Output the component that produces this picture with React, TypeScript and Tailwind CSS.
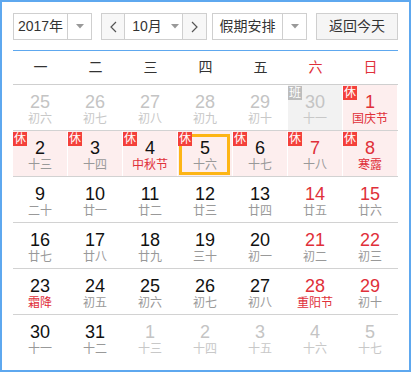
import React from "react";

type Day = {
  n: number;
  lunar: string;
  other?: boolean;
  fest?: boolean;
  badge?: "休" | "班";
  selected?: boolean;
};

const rows: Day[][] = [
  [
    { n: 25, lunar: "初六", other: true },
    { n: 26, lunar: "初七", other: true },
    { n: 27, lunar: "初八", other: true },
    { n: 28, lunar: "初九", other: true },
    { n: 29, lunar: "初十", other: true },
    { n: 30, lunar: "十一", other: true, badge: "班" },
    { n: 1, lunar: "国庆节", fest: true, badge: "休" },
  ],
  [
    { n: 2, lunar: "十三", badge: "休" },
    { n: 3, lunar: "十四", badge: "休" },
    { n: 4, lunar: "中秋节", fest: true, badge: "休" },
    { n: 5, lunar: "十六", badge: "休", selected: true },
    { n: 6, lunar: "十七", badge: "休" },
    { n: 7, lunar: "十八", badge: "休" },
    { n: 8, lunar: "寒露", fest: true, badge: "休" },
  ],
  [
    { n: 9, lunar: "二十" },
    { n: 10, lunar: "廿一" },
    { n: 11, lunar: "廿二" },
    { n: 12, lunar: "廿三" },
    { n: 13, lunar: "廿四" },
    { n: 14, lunar: "廿五" },
    { n: 15, lunar: "廿六" },
  ],
  [
    { n: 16, lunar: "廿七" },
    { n: 17, lunar: "廿八" },
    { n: 18, lunar: "廿九" },
    { n: 19, lunar: "三十" },
    { n: 20, lunar: "初一" },
    { n: 21, lunar: "初二" },
    { n: 22, lunar: "初三" },
  ],
  [
    { n: 23, lunar: "霜降", fest: true },
    { n: 24, lunar: "初五" },
    { n: 25, lunar: "初六" },
    { n: 26, lunar: "初七" },
    { n: 27, lunar: "初八" },
    { n: 28, lunar: "重阳节", fest: true },
    { n: 29, lunar: "初十" },
  ],
  [
    { n: 30, lunar: "十一" },
    { n: 31, lunar: "十二" },
    { n: 1, lunar: "十三", other: true },
    { n: 2, lunar: "十四", other: true },
    { n: 3, lunar: "十五", other: true },
    { n: 4, lunar: "十六", other: true },
    { n: 5, lunar: "十七", other: true },
  ],
];

const weekdays = ["一", "二", "三", "四", "五", "六", "日"];

function Caret() {
  return (
    <svg width="8" height="5" viewBox="0 0 8 5">
      <path d="M0 0 L8 0 L4 4.5 Z" fill="#999" />
    </svg>
  );
}

function Chevron({ dir }: { dir: "left" | "right" }) {
  return (
    <svg width="7" height="12" viewBox="0 0 7 12">
      <polyline
        points={dir === "left" ? "6,1 1,6 6,11" : "1,1 6,6 1,11"}
        fill="none"
        stroke="#555"
        strokeWidth="1.2"
      />
    </svg>
  );
}

function Cell({ d, col }: { d: Day; col: number }) {
  const weekend = col >= 5;
  let bg = "";
  if (d.badge === "休") bg = "bg-[#fdeeee]";
  if (d.badge === "班") bg = "bg-[#f2f2f2]";

  let numColor = "text-[#111]";
  if (d.other) numColor = "text-[#c4c4c4]";
  else if (weekend) numColor = "text-[#e0303a]";

  let lunarColor = "text-[#999]";
  if (d.other) lunarColor = "text-[#c8c8c8]";
  if (d.fest) lunarColor = "text-[#e0303a]";

  return (
    <div className={`relative h-[45px] border-r border-white ${bg}`}>
      {d.selected && (
        <div className="absolute left-[1px] top-[3px] right-[2px] bottom-[1px] border-[3px] border-[#fdb515]" />
      )}
      {d.badge && (
        <div
          className={`absolute left-0 top-[1px] z-10 flex h-[14px] w-[14px] items-center justify-center text-[12px] leading-none text-white ${
            d.badge === "休" ? "bg-[#f4403a]" : "bg-[#bdbdbd]"
          }`}
        >
          {d.badge}
        </div>
      )}
      <div className="flex flex-col items-center pt-[7px]">
        <span className={`text-[18px] leading-[20px] ${numColor}`}>{d.n}</span>
        <span className={`text-[12px] leading-[14px] ${lunarColor}`}>{d.lunar}</span>
      </div>
    </div>
  );
}

export default function App() {
  return (
    <div
      className="h-[372px] w-[411px] border-2 border-[#5ea8ef] bg-white px-[11px] pt-[11px] text-[#333]"
      style={{ fontFamily: '"Liberation Sans", "Noto Sans CJK SC", sans-serif' }}
    >
      {/* Toolbar */}
      <div className="flex h-[27px] items-stretch text-[14px]">
        <div className="flex w-[79px] border border-[#cfcfcf]">
          <div className="flex flex-1 items-center justify-center">2017年</div>
          <div className="flex w-[24px] items-center justify-center border-l border-[#cfcfcf]">
            <Caret />
          </div>
        </div>

        <div className="ml-[9px] flex w-[106px] border border-[#cfcfcf]">
          <div className="flex w-[22px] items-center justify-center bg-[#f7f7f7]">
            <Chevron dir="left" />
          </div>
          <div className="flex flex-1 items-center justify-center gap-[9px] border-x border-[#cfcfcf] pl-[4px]">
            <span>10月</span>
            <Caret />
          </div>
          <div className="flex w-[23px] items-center justify-center bg-[#f7f7f7]">
            <Chevron dir="right" />
          </div>
        </div>

        <div className="ml-[5px] flex w-[95px] border border-[#cfcfcf]">
          <div className="flex flex-1 items-center justify-center">假期安排</div>
          <div className="flex w-[24px] items-center justify-center border-l border-[#cfcfcf]">
            <Caret />
          </div>
        </div>

        <div className="ml-[9px] flex w-[82px] items-center justify-center border border-[#cfcfcf] bg-[#f5f5f5]">
          返回今天
        </div>
      </div>

      <div className="mt-[10px] h-px bg-[#5ea8ef]" />

      {/* Weekday header */}
      <div className="grid h-[34px] grid-cols-7 border-b border-[#cfcfcf] text-[14px]">
        {weekdays.map((w, i) => (
          <div
            key={w}
            className={`flex items-center justify-center ${i >= 5 ? "text-[#e0303a]" : "text-[#333]"}`}
          >
            {w}
          </div>
        ))}
      </div>

      {/* Days */}
      {rows.map((row, ri) => (
        <div
          key={ri}
          className={`grid grid-cols-7 ${ri < rows.length - 1 ? "border-b border-[#d2d2d2]" : ""}`}
        >
          {row.map((d, ci) => (
            <Cell key={ci} d={d} col={ci} />
          ))}
        </div>
      ))}
    </div>
  );
}
